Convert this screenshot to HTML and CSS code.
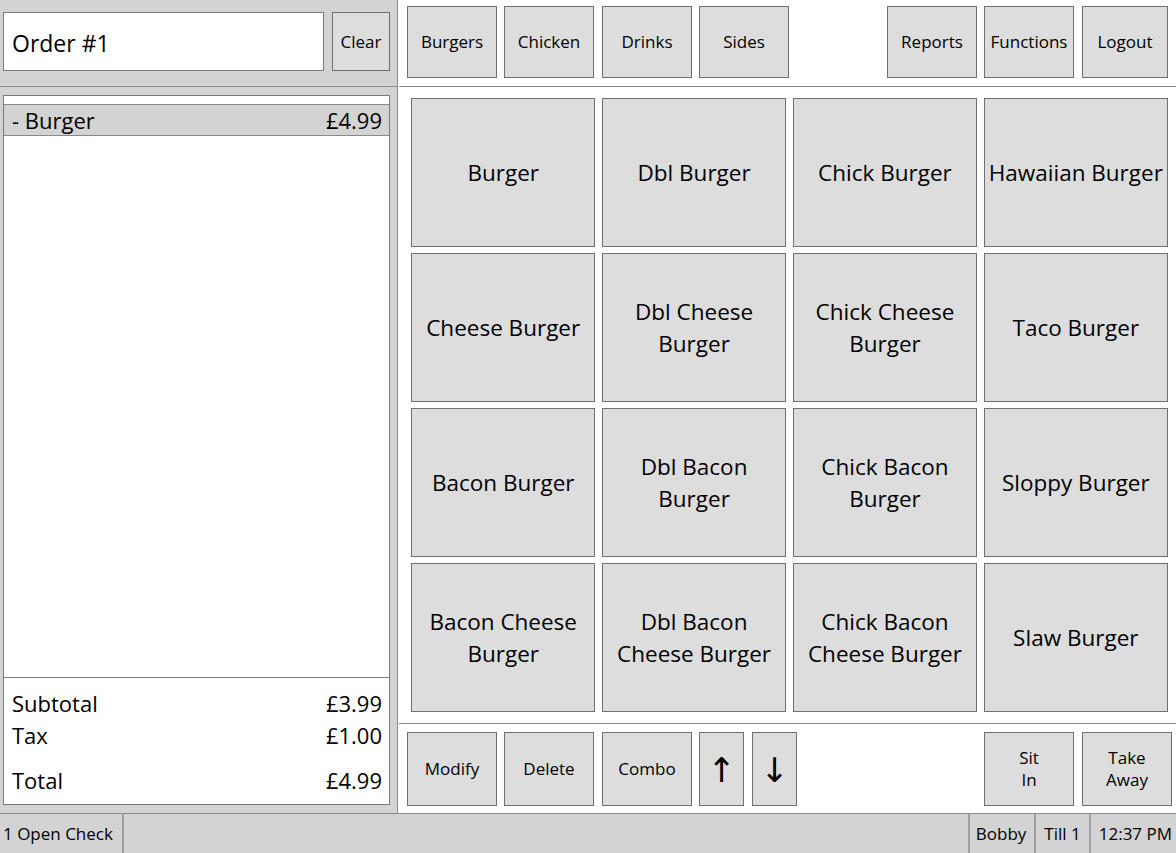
FILE: index.html
```html
<!DOCTYPE html>
<html>
<head>
<meta charset="utf-8">
<link rel="stylesheet" href="styles.css">
</head>
<body>
<div class="app">
  <div class="left">
    <div class="order-head">
      <div class="order-box">Order #1</div>
      <button class="btn clear">Clear</button>
    </div>
    <div class="order-list">
      <div class="list-top"></div>
      <div class="line-item"><span>- Burger</span><span>£4.99</span></div>
      <div class="list-space"></div>
      <div class="totals">
        <div class="trow"><span>Subtotal</span><span>£3.99</span></div>
        <div class="trow"><span>Tax</span><span>£1.00</span></div>
        <div class="trow total"><span>Total</span><span>£4.99</span></div>
      </div>
    </div>
  </div>
  <div class="right">
    <div class="topbar">
      <div class="group">
        <button class="btn cat">Burgers</button>
        <button class="btn cat">Chicken</button>
        <button class="btn cat shift">Drinks</button>
        <button class="btn cat">Sides</button>
      </div>
      <div class="group">
        <button class="btn cat">Reports</button>
        <button class="btn cat">Functions</button>
        <button class="btn cat logout">Logout</button>
      </div>
    </div>
    <div class="grid-area">
      <div class="items">
        <button class="btn item">Burger</button>
        <button class="btn item">Dbl Burger</button>
        <button class="btn item">Chick Burger</button>
        <button class="btn item">Hawaiian Burger</button>
        <button class="btn item">Cheese Burger</button>
        <button class="btn item">Dbl Cheese<br>Burger</button>
        <button class="btn item">Chick Cheese<br>Burger</button>
        <button class="btn item">Taco Burger</button>
        <button class="btn item">Bacon Burger</button>
        <button class="btn item">Dbl Bacon<br>Burger</button>
        <button class="btn item">Chick Bacon<br>Burger</button>
        <button class="btn item">Sloppy Burger</button>
        <button class="btn item">Bacon Cheese<br>Burger</button>
        <button class="btn item">Dbl Bacon<br>Cheese Burger</button>
        <button class="btn item">Chick Bacon<br>Cheese Burger</button>
        <button class="btn item">Slaw Burger</button>
      </div>
    </div>
    <div class="bottombar">
      <div class="group">
        <button class="btn cat">Modify</button>
        <button class="btn cat">Delete</button>
        <button class="btn cat shift">Combo</button>
        <button class="btn arrow">&#8593;</button>
        <button class="btn arrow shift">&#8595;</button>
      </div>
      <div class="group wide">
        <button class="btn cat">Sit<br>In</button>
        <button class="btn cat">Take<br>Away</button>
      </div>
    </div>
  </div>
  <div class="status">
    <div class="cell first">1 Open Check</div>
    <div class="cell fill"></div>
    <div class="cell user">Bobby</div>
    <div class="cell">Till 1</div>
    <div class="cell last">12:37 PM</div>
  </div>
</div>
</body>
</html>
```

FILE: styles.css
```css
* { box-sizing: border-box; }
html, body {
  margin: 0;
  padding: 0;
}
body {
  width: 1176px;
  height: 853px;
  overflow: hidden;
  font-family: "Segoe UI", "Open Sans", "Noto Sans", sans-serif;
  color: #000;
  background: #d3d3d3;
}
.app {
  display: grid;
  grid-template-columns: 398px 778px;
  grid-template-rows: 813px 40px;
  width: 1176px;
  height: 853px;
}
.btn {
  font-family: inherit;
  background: #dddddd;
  border: 1px solid #707070;
  color: #000;
  padding: 0;
  margin: 0;
  cursor: default;
  line-height: 1.3;
}

/* left */
.left {
  background: #d3d3d3;
  border-right: 1px solid #8a8a8a;
  display: flex;
  flex-direction: column;
}
.order-head {
  height: 87px;
  border-bottom: 1px solid #8a8a8a;
  display: flex;
  align-items: flex-start;
  padding: 12px 0 0 3px;
  gap: 8px;
}
.order-box {
  width: 321px;
  height: 59px;
  background: #fff;
  border: 1px solid #7a7a7a;
  font-size: 23px;
  display: flex;
  align-items: center;
  padding: 3px 0 0 8px;
}
.clear {
  width: 58px;
  height: 59px;
  font-size: 17px;
  padding-top: 2px;
}
.order-list {
  margin: 8px 0 0 3px;
  width: 387px;
  height: 710px;
  background: #fff;
  border: 1px solid #7a7a7a;
  display: flex;
  flex-direction: column;
}
.list-top { height: 8px; }
.line-item {
  height: 32px;
  background: #d3d3d3;
  border-top: 1px solid #8a8a8a;
  border-bottom: 1px solid #8a8a8a;
  display: flex;
  justify-content: space-between;
  align-items: center;
  padding: 0 7px 0 8px;
  font-size: 22px;
}
.list-space {
  flex: 1;
  border-bottom: 1px solid #7a7a7a;
}
.totals {
  height: 126px;
  padding: 9px 7px 0 8px;
  font-size: 22px;
}
.trow {
  display: flex;
  justify-content: space-between;
  height: 32px;
  align-items: center;
}
.trow.total { margin-top: 13px; }

/* right */
.right {
  background: #fff;
  display: flex;
  flex-direction: column;
  border-left: 1px solid #fff;
}
.topbar {
  height: 87px;
  border-bottom: 1px solid #8a8a8a;
  display: flex;
  justify-content: space-between;
  padding: 6px 0 0 8px;
}
.group {
  display: flex;
  gap: 7px;
  align-items: flex-start;
}
.shift { margin-left: 1px; }
.cat {
  width: 90px;
  height: 72px;
  font-size: 17px;
}
.logout { width: 86px; margin-left: 1px; }
.topbar .group:last-child { margin-right: 8px; }
.grid-area {
  height: 637px;
  border-bottom: 1px solid #8a8a8a;
  padding: 11px 0 0 12px;
}
.items {
  display: grid;
  width: 757px;
  grid-template-columns: repeat(4, 1fr);
  grid-template-rows: repeat(4, 149px);
  gap: 6px 6.5px;
}
.item {
  font-size: 22.5px;
  line-height: 32px;
}
.bottombar {
  flex: 1;
  display: flex;
  justify-content: space-between;
  padding: 8px 0 0 8px;
}
.bottombar .cat { height: 74px; }
.arrow {
  width: 45px;
  height: 74px;
  font-family: "DejaVu Sans", sans-serif;
  font-size: 34px;
  line-height: 1;
  padding-top: 2px;
}
.group.wide { gap: 8px; margin-right: 4px; }

/* status */
.status {
  grid-column: 1 / 3;
  border-top: 1px solid #8a8a8a;
  background: #d3d3d3;
  display: flex;
  font-size: 17px;
}
.cell {
  display: flex;
  align-items: center;
  padding: 0 8px;
  border-left: 2px solid #a0a0a0;
}
.cell.first { border-left: none; padding-left: 3px; width: 122px; }
.cell.fill { flex: 1; }
.cell.user { padding-left: 6px; }
.cell.last { padding-right: 4px; }
```
